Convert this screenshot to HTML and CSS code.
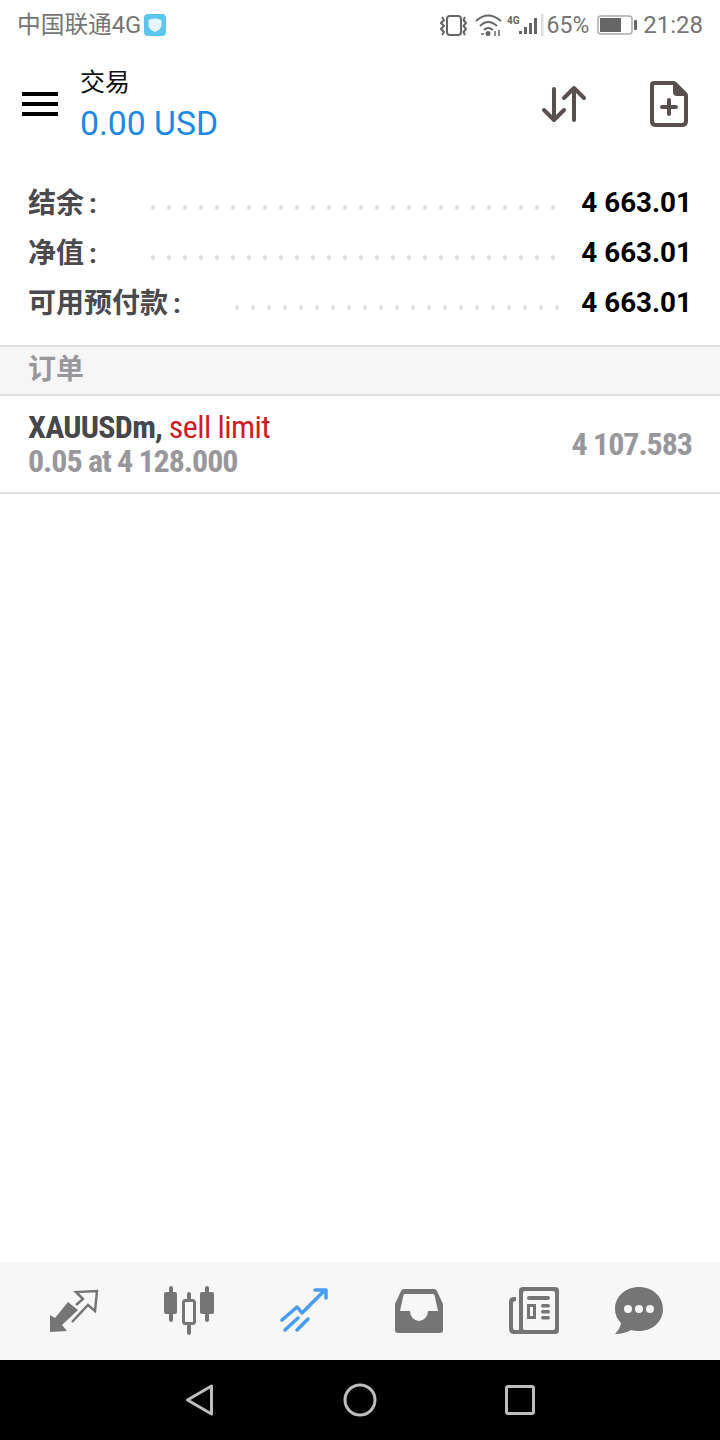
FILE: index.html
```html
<!DOCTYPE html>
<html lang="zh">
<head>
    <meta charset="UTF-8">
    <meta name="viewport" content="width=device-width, initial-scale=1.0">
    <title>交易</title>
    <link rel="stylesheet" href="styles.css">
</head>
<body>
    <div class="screen">
        <div class="status-bar">
            <div class="status-left">
                <span class="carrier">中国联通4G</span>
                <svg width="22" height="22" viewBox="0 0 22 22">
                    <rect width="22" height="22" rx="4" fill="#5cc6ec"/>
                    <path d="M4.5 6 Q11 3 17.500 6 V11 Q17 16 11 18 Q5 16 4.500 11Z" fill="#e6f6fc"/>
                </svg>
            </div>
            <div class="status-right">
                <svg class="icon-vibrate" width="28" height="24" viewBox="0 0 28 24" fill="none" stroke="#666" stroke-width="2">
                    <rect x="7" y="3" width="14" height="19" rx="3"/>
                    <path d="M2 4l2 3-3 3 3 3-3 3 3 3-2 3M25 4l-1.500 3 2.500 3-2.500 3 2.500 3-2.500 3 1.500 3"/>
                </svg>
                <svg width="28" height="24" viewBox="0 0 28 24" fill="none" stroke="#666" stroke-width="2">
                    <path d="M1 8Q13 -3 26 8M5 13Q13 5 22 13M9 17Q13 13 18 17"/>
                    <circle cx="13" cy="20.500" r="2.500" fill="#666" stroke="none"/>
                    <path d="M6 21H9M20 18V23M24 17V23" stroke-width="1.500"/>
                </svg>
                <svg width="38" height="24" viewBox="0 0 38 24">
                    <text x="1" y="11" class="net-label">4G</text>
                    <rect x="13" y="18" width="3" height="3" fill="#666"/>
                    <rect x="18" y="14" width="3" height="7" fill="#666"/>
                    <rect x="23" y="10" width="3" height="11" fill="#666"/>
                    <rect x="28" y="5" width="3" height="16" fill="#666"/>
                    <rect x="35" y="1" width="2.500" height="22" fill="#ddd"/>
                </svg>
                <span class="battery-pct">65%</span>
                <svg class="icon-battery" width="40" height="20" viewBox="0 0 40 20">
                    <rect x="1" y="1" width="34" height="18" rx="3" fill="none" stroke="#aaa" stroke-width="1.500"/>
                    <rect x="3" y="3" width="21" height="14" fill="#666"/>
                    <rect x="37" y="5" width="3" height="10" rx="1" fill="#666"/>
                </svg>
                <span>21:28</span>
            </div>
        </div>

        <header class="toolbar">
            <div class="menu-btn"><span></span><span></span><span></span></div>
            <div class="title-block">
                <div class="title">交易</div>
                <div class="subtitle">0.00 USD</div>
            </div>
            <div class="toolbar-actions">
                <svg width="46" height="40" viewBox="0 0 46 40" fill="none" stroke="#584f4e" stroke-width="4" stroke-linecap="round" stroke-linejoin="round">
                    <path d="M13 5V36M3 26L13 36L23 26"/>
                    <path d="M33 36V4M23 14L33 4L43 14"/>
                </svg>
                <svg width="38" height="46" viewBox="0 0 38 46" fill="none">
                    <path d="M4 2H24L36 14V40Q36 44 32 44H6Q2 44 2 40V4Q2 2 4 2Z" stroke="#584f4e" stroke-width="4" stroke-linejoin="round"/>
                    <path d="M23 1H26L37 12V15H27Q23 15 23 11Z" fill="#584f4e"/>
                    <path d="M19 19V33M12 26H26" stroke="#584f4e" stroke-width="4" stroke-linecap="round"/>
                </svg>
            </div>
        </header>

        <section class="summary">
            <div class="summary-row">
                <span class="summary-label">结余 :</span>
                <span class="leader"></span>
                <span class="summary-value">4 663.01</span>
            </div>
            <div class="summary-row">
                <span class="summary-label">净值 :</span>
                <span class="leader"></span>
                <span class="summary-value">4 663.01</span>
            </div>
            <div class="summary-row">
                <span class="summary-label">可用预付款 :</span>
                <span class="leader"></span>
                <span class="summary-value">4 663.01</span>
            </div>
        </section>

        <div class="section-head">订单</div>

        <div class="order">
            <div>
                <div class="order-title">XAUUSDm, <span class="order-type">sell limit</span></div>
                <div class="order-detail">0.05 at 4 128.000</div>
            </div>
            <div class="order-price">4 107.583</div>
        </div>

        <div class="spacer"></div>

        <nav class="tabs">
            <svg width="50" height="46" viewBox="0 0 50 46">
                <path d="M1 27V44L18 43 13 37 29 22 19 14 6 30Z" fill="#757575"/>
                <path d="M27 17L34 11 27 4 48 3 46 23 39 17 23 34" fill="none" stroke="#757575" stroke-width="2.500"/>
            </svg>
            <svg class="tab-candles" width="50" height="50" viewBox="0 0 50 50" fill="#757575">
                <rect x="0" y="6" width="13" height="22" rx="2"/><rect x="5" y="0" width="4" height="36" rx="2"/>
                <rect x="36" y="6" width="14" height="22" rx="2"/><rect x="41" y="0" width="4" height="36" rx="2"/>
                <rect x="19.500" y="14.500" width="11" height="23" rx="2" fill="none" stroke="#757575" stroke-width="3"/><rect x="23" y="6" width="4" height="8" rx="2"/><rect x="23" y="38" width="4" height="11" rx="2"/>
            </svg>
            <svg width="48" height="46" viewBox="0 0 48 46" fill="none" stroke="#479cf3" stroke-width="3.500" stroke-linecap="round" stroke-linejoin="round">
                <path d="M2 32L17 19 22 25 45 2M35 2H46V10"/>
                <path d="M5 42L18 30M17 42L28 31"/>
            </svg>
            <svg class="tab-inbox" width="48" height="44" viewBox="0 0 48 44" fill="#757575">
                <path fill-rule="evenodd" d="M9 0H39Q41 0 42 2L48 15V41Q48 44 45 44H3Q0 44 0 41V15L6 2Q7 0 9 0ZM10 5Q9 5 8.500 6L5 22H15A9 10 0 0 0 33 22H43L39.500 6Q39 5 38 5Z"/>
            </svg>
            <svg width="50" height="48" viewBox="0 0 50 48">
                <path d="M7 10H5Q0 10 0 15V42Q0 47 5 47H14V43H6Q4 43 4 41V16Q4 14 7 14Z" fill="#757575"/>
                <rect x="10" y="0" width="40" height="47" rx="4" fill="#757575"/>
                <rect x="14" y="4" width="32" height="39" rx="2" fill="#f7f7f7"/>
                <rect x="18" y="9" width="23" height="4" rx="2" fill="#757575"/>
                <path fill-rule="evenodd" d="M18 17H27V32H18ZM21 20V29H24V20Z" fill="#757575"/>
                <rect x="32" y="17" width="9" height="3.500" rx="1.700" fill="#757575"/>
                <rect x="32" y="23" width="9" height="3.500" rx="1.700" fill="#757575"/>
                <rect x="32" y="29" width="9" height="3.500" rx="1.700" fill="#757575"/>
            </svg>
            <svg class="tab-chat" width="48" height="48" viewBox="0 0 48 48">
                <path d="M24 0C37 0 48 9 48 22S37 44 24 44Q19 44 16 43Q9 47 0 47Q5 42 6 36Q0 30 0 22C0 9 11 0 24 0Z" fill="#757575"/>
                <circle cx="13" cy="22" r="4" fill="#f7f7f7"/><circle cx="24" cy="22" r="4" fill="#f7f7f7"/><circle cx="35" cy="22" r="4" fill="#f7f7f7"/>
            </svg>
        </nav>

        <div class="nav-bar">
            <svg width="32" height="34" viewBox="0 0 32 34"><path d="M27.500 3V31L3.500 17Z" fill="none" stroke="#bdbdbd" stroke-width="3" stroke-linejoin="round"/></svg>
            <svg width="34" height="34" viewBox="0 0 34 34"><circle cx="17" cy="17" r="15" fill="none" stroke="#bdbdbd" stroke-width="3"/></svg>
            <svg width="32" height="32" viewBox="0 0 32 32"><rect x="2.500" y="2.500" width="27" height="27" rx="1.500" fill="none" stroke="#bdbdbd" stroke-width="3"/></svg>
        </div>
    </div>
</body>
</html>
```

FILE: styles.css
```css
* {
    box-sizing: border-box;
}
body {
    margin: 0;
    background-color: #ffffff;
    font-family: Roboto, "Noto Sans CJK SC", sans-serif;
}
.screen {
    width: 720px;
    height: 1440px;
    display: flex;
    flex-direction: column;
    overflow: hidden;
}
.status-bar {
    height: 50px;
    display: flex;
    align-items: center;
    justify-content: space-between;
    padding: 0 17px 0 17px;
    color: #757575;
    font-size: 24px;
}
.status-left,
.status-right {
    display: flex;
    align-items: center;
}
.status-left {
    gap: 3px;
}
.carrier {
    font-size: 23.7px;
    margin-bottom: 4px;
}
.status-right {
    gap: 3px;
}
.icon-vibrate {
    margin-right: 4px;
}
.battery-pct {
    font-size: 23px;
    margin-right: 5px;
}
.icon-battery {
    margin-right: 3px;
}
.net-label {
    font-size: 10px;
    font-weight: bold;
    fill: #666;
}
.toolbar {
    height: 108px;
    display: flex;
    align-items: center;
    padding: 0 32px 0 22px;
}
.menu-btn {
    width: 36px;
    height: 24px;
    display: flex;
    flex-direction: column;
    justify-content: space-between;
    margin-right: 22px;
}
.menu-btn span {
    height: 4px;
    background-color: #000;
}
.title-block {
    flex: 1;
    margin-top: 10px;
}
.title {
    font-size: 25px;
    line-height: 30px;
    color: #111;
}
.subtitle {
    font-size: 33.7px;
    line-height: 52px;
    color: #1e88e5;
}
.toolbar-actions {
    display: flex;
    align-items: center;
    gap: 63px;
}
.summary {
    padding: 18px 28px 0 28px;
    height: 187px;
}
.summary-row {
    height: 50px;
    display: flex;
    align-items: center;
}
.summary-label {
    font-size: 28px;
    font-weight: bold;
    color: #4a4a4f;
    word-spacing: -2px;
}
.leader {
    flex: 1;
    height: 5px;
    margin: 13px 21px 0 48px;
    background-image: radial-gradient(circle, #e0e0e0 2px, transparent 2.500px);
    background-size: 16px 5px;
    background-repeat: repeat-x;
}
.summary-value {
    font-size: 27.8px;
    font-weight: bold;
    color: #000;
    margin-top: 2px;
}
.section-head {
    height: 51px;
    background-color: #f6f6f6;
    border-top: 2px solid #e0e0e0;
    border-bottom: 2px solid #e0e0e0;
    padding-left: 28px;
    font-size: 28px;
    line-height: 45px;
    font-weight: bold;
    color: #98989c;
}
.order {
    height: 98px;
    display: flex;
    align-items: center;
    justify-content: space-between;
    padding: 0 28px;
    border-bottom: 2px solid #e0e0e0;
    font-family: "Roboto Condensed", Roboto, sans-serif;
}
.order-title,
.order-detail,
.order-price {
    font-size: 32px;
    font-weight: bold;
    line-height: 34px;
}
.order-title {
    color: #46464c;
    letter-spacing: -0.75px;
}
.order-type {
    font-weight: normal;
    color: #cc1f24;
    letter-spacing: -0.6px;
}
.order-detail,
.order-price {
    color: #98989c;
    letter-spacing: -1.05px;
}
.spacer {
    flex: 1;
}
.tabs {
    height: 98px;
    background-color: #f7f7f7;
    display: flex;
    align-items: center;
    gap: 66px;
    padding-left: 49px;
}
.tab-candles {
    margin-left: -1px;
}
.tab-inbox {
    margin-left: 1px;
}
.tab-chat {
    margin-left: -10px;
}
.nav-bar {
    height: 80px;
    background-color: #000;
    display: flex;
    align-items: center;
    padding: 0 184px;
    justify-content: space-between;
}
```
